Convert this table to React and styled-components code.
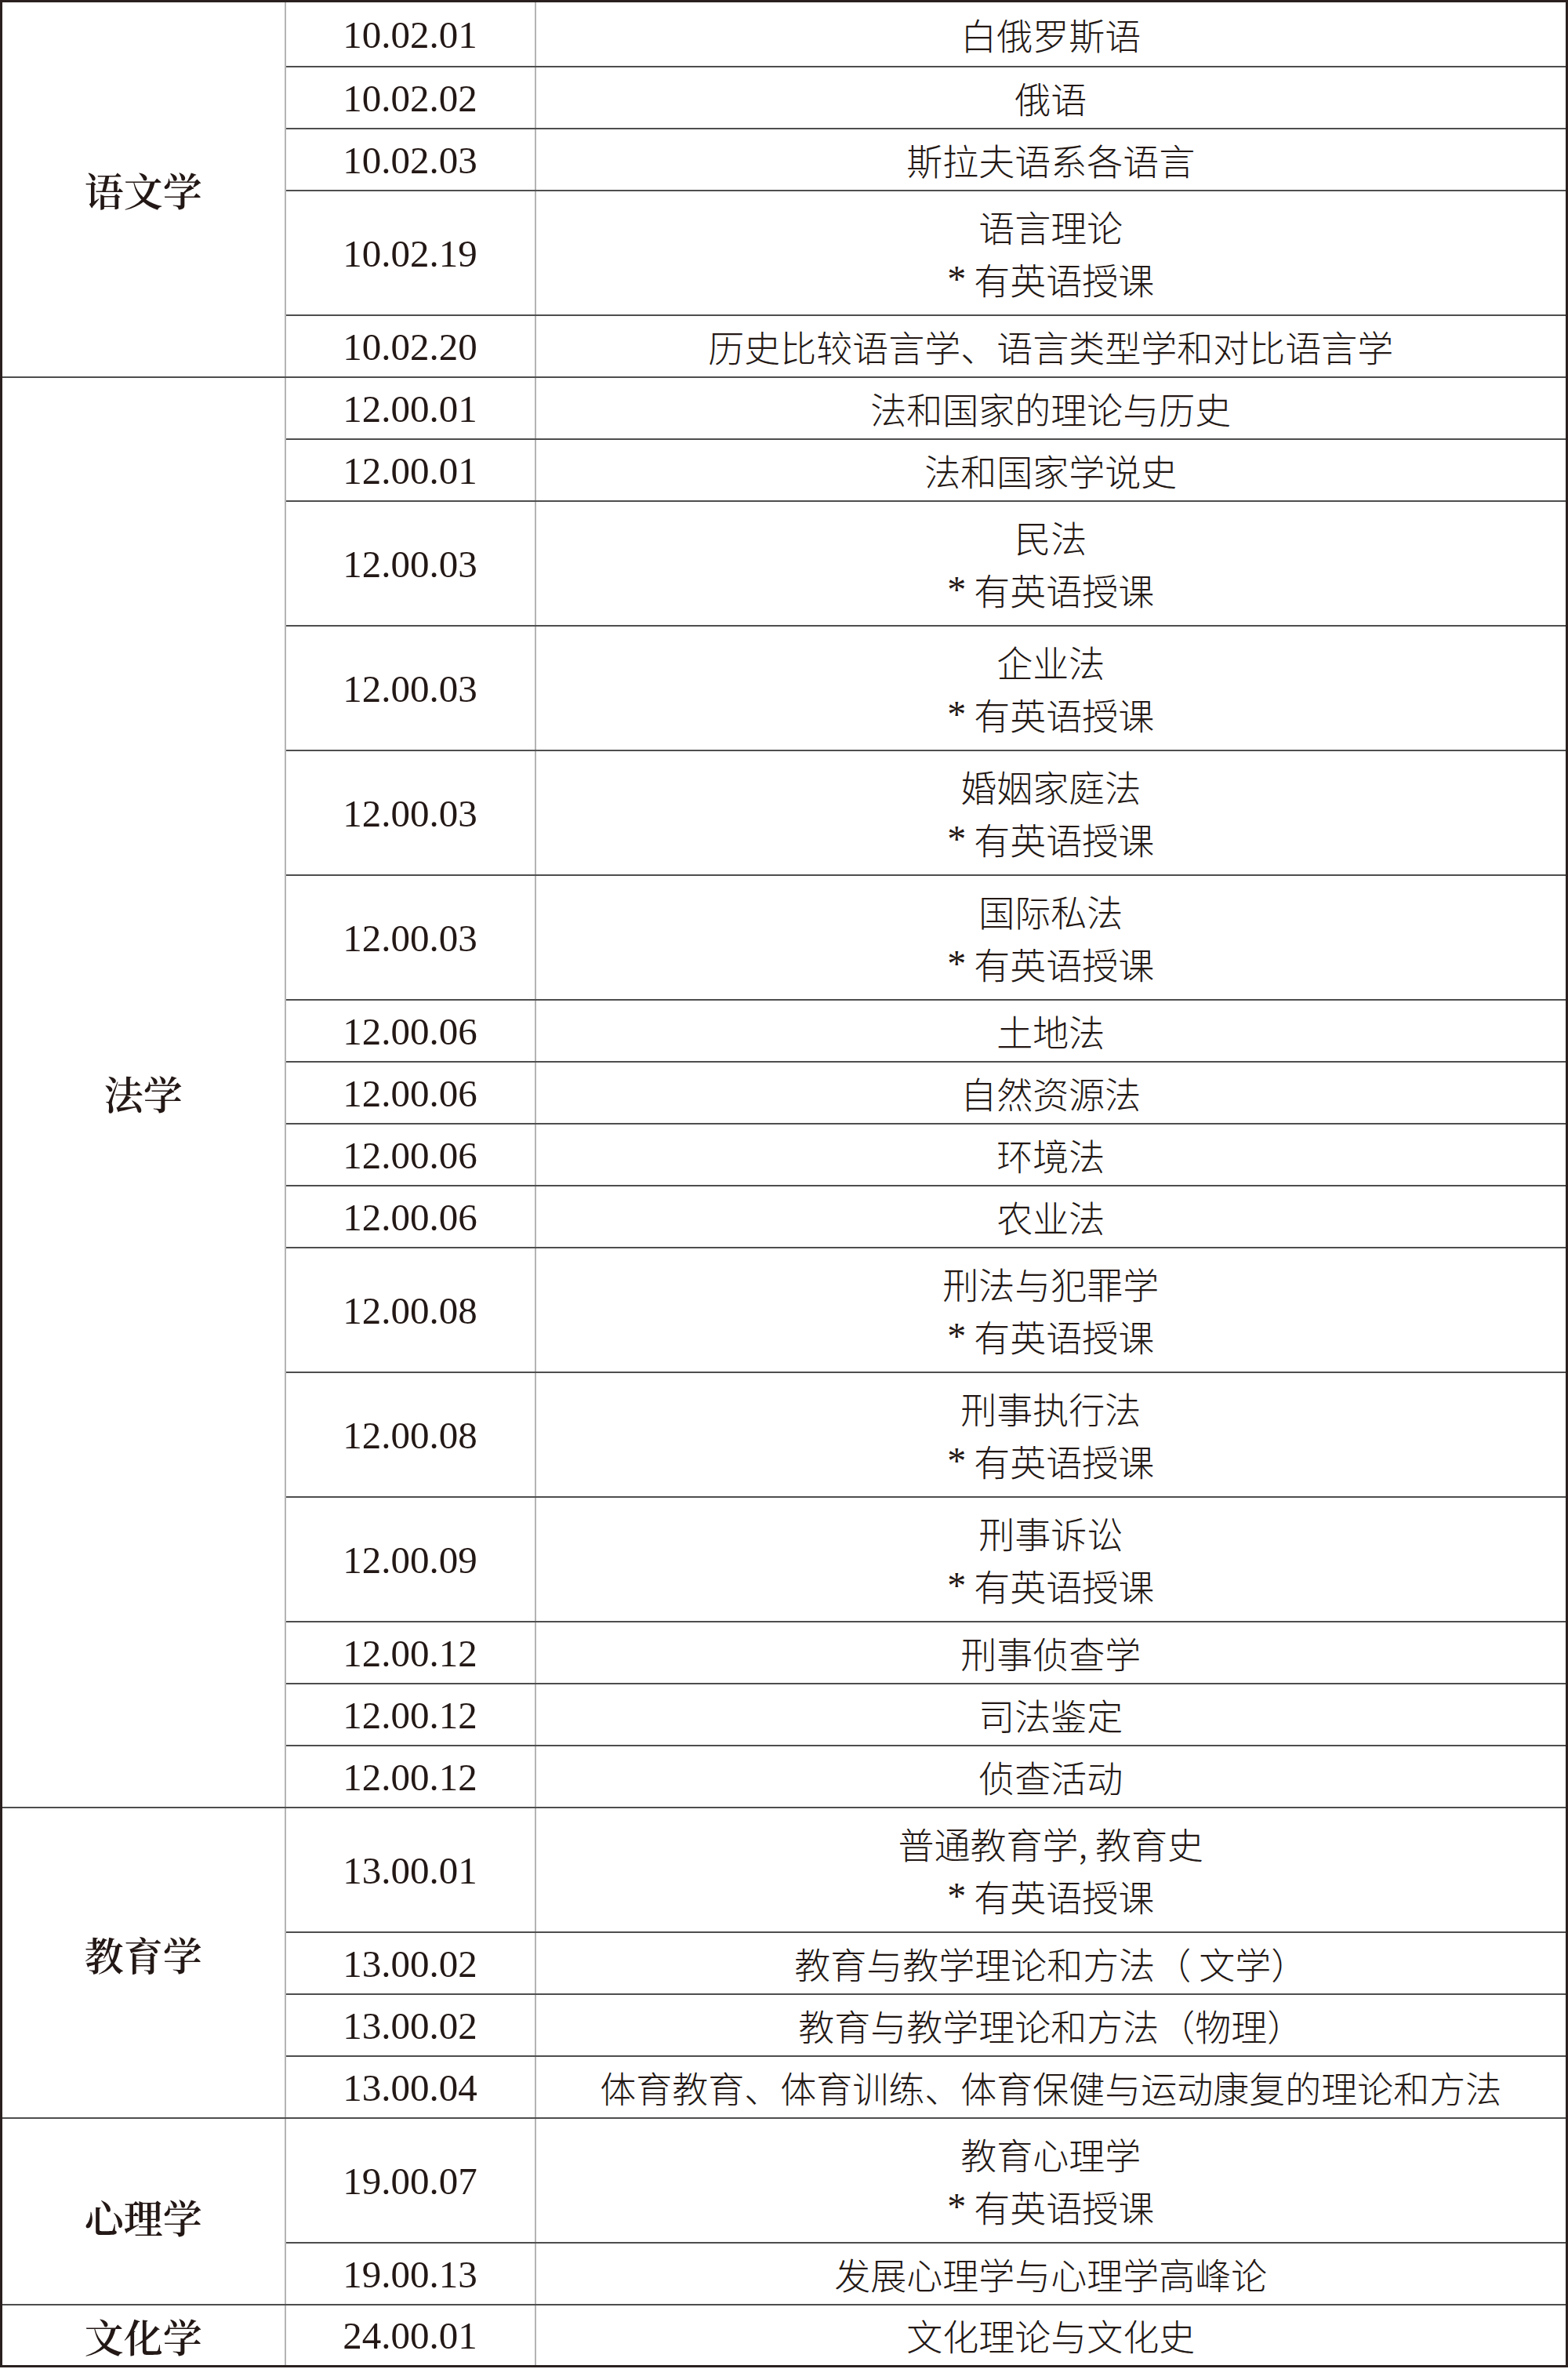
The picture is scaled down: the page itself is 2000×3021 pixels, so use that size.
import React from "react";
import styled, { createGlobalStyle } from "styled-components";

const GlobalStyle = createGlobalStyle`
  html, body {
    margin: 0;
    padding: 0;
    background: #ffffff;
  }
  body {
    width: 2000px;
    overflow: hidden;
  }
`;

const Table = styled.table`
  width: 2000px;
  table-layout: fixed;
  border-collapse: collapse;
  border: 3px solid #2a2020;
  color: #231815;
`;

const Row = styled.tr`
  height: ${(p) => (p.$tall ? "159px" : p.$first ? "83px" : "79px")};
`;

const Cell = styled.td`
  padding: 0;
  text-align: center;
  vertical-align: middle;
  border-top: 2px solid #4e4e4e;
  border-bottom: 2px solid #4e4e4e;
  border-left: 2px solid #b4b4b4;
  border-right: 2px solid #b4b4b4;
`;

// $shift moves the label down (positive) or up (negative) inside its span
const GroupCell = styled(Cell)`
  font-family: "Noto Serif CJK SC", "Noto Sans CJK SC", serif;
  font-weight: 600;
  font-size: 50px;
  border-left: 3px solid #2a2020;
  padding-top: ${(p) => (p.$shift > 0 ? p.$shift * 2 : 0)}px;
  padding-bottom: ${(p) => (p.$shift < 0 ? -p.$shift * 2 : 0)}px;
`;

const CodeCell = styled(Cell)`
  font-family: "Liberation Serif", "Times New Roman", serif;
  font-size: 49px;
  line-height: 1;
  padding-top: 2px;
`;

const NameCell = styled(Cell)`
  font-family: "Noto Sans CJK SC", sans-serif;
  font-weight: 300;
  font-size: 46px;
  line-height: 67px;
  border-right: 3px solid #2a2020;
`;

const Line = styled.div`
  white-space: nowrap;
`;

const Star = styled.span`
  font-family: "Liberation Serif", serif;
  font-size: 48px;
  margin-right: 10px;
  vertical-align: 3px;
`;

const groups = [
  {
    label: "语文学",
    rows: [
      { code: "10.02.01", name: "白俄罗斯语" },
      { code: "10.02.02", name: "俄语" },
      { code: "10.02.03", name: "斯拉夫语系各语言" },
      { code: "10.02.19", name: "语言理论", en: true },
      { code: "10.02.20", name: "历史比较语言学、语言类型学和对比语言学" },
    ],
  },
  {
    label: "法学",
    rows: [
      { code: "12.00.01", name: "法和国家的理论与历史" },
      { code: "12.00.01", name: "法和国家学说史" },
      { code: "12.00.03", name: "民法", en: true },
      { code: "12.00.03", name: "企业法", en: true },
      { code: "12.00.03", name: "婚姻家庭法", en: true },
      { code: "12.00.03", name: "国际私法", en: true },
      { code: "12.00.06", name: "土地法" },
      { code: "12.00.06", name: "自然资源法" },
      { code: "12.00.06", name: "环境法" },
      { code: "12.00.06", name: "农业法" },
      { code: "12.00.08", name: "刑法与犯罪学", en: true },
      { code: "12.00.08", name: "刑事执行法", en: true },
      { code: "12.00.09", name: "刑事诉讼", en: true },
      { code: "12.00.12", name: "刑事侦查学" },
      { code: "12.00.12", name: "司法鉴定" },
      { code: "12.00.12", name: "侦查活动" },
    ],
  },
  {
    label: "教育学",
    shift: -12,
    rows: [
      { code: "13.00.01", name: "普通教育学, 教育史", en: true },
      { code: "13.00.02", name: "教育与教学理论和方法（ 文学）" },
      { code: "13.00.02", name: "教育与教学理论和方法（物理）" },
      { code: "13.00.04", name: "体育教育、体育训练、体育保健与运动康复的理论和方法" },
    ],
  },
  {
    label: "心理学",
    shift: 6,
    rows: [
      { code: "19.00.07", name: "教育心理学", en: true },
      { code: "19.00.13", name: "发展心理学与心理学高峰论" },
    ],
  },
  {
    label: "文化学",
    rows: [{ code: "24.00.01", name: "文化理论与文化史" }],
  },
];

const App = () => {
  return (
    <>
      <GlobalStyle />
      <Table>
        <colgroup>
          <col style={{ width: "362px" }} />
          <col style={{ width: "319px" }} />
          <col />
        </colgroup>
        <tbody>
          {groups.map((group, g) =>
            group.rows.map((row, i) => (
              <Row
                key={group.label + i}
                $tall={row.en}
                $first={g === 0 && i === 0}
              >
                {i === 0 && (
                  <GroupCell rowSpan={group.rows.length} $shift={group.shift || 0}>
                    {group.label}
                  </GroupCell>
                )}
                <CodeCell>{row.code}</CodeCell>
                <NameCell>
                  <Line>{row.name}</Line>
                  {row.en && (
                    <Line>
                      <Star>*</Star>有英语授课
                    </Line>
                  )}
                </NameCell>
              </Row>
            ))
          )}
        </tbody>
      </Table>
    </>
  );
};

export default App;
